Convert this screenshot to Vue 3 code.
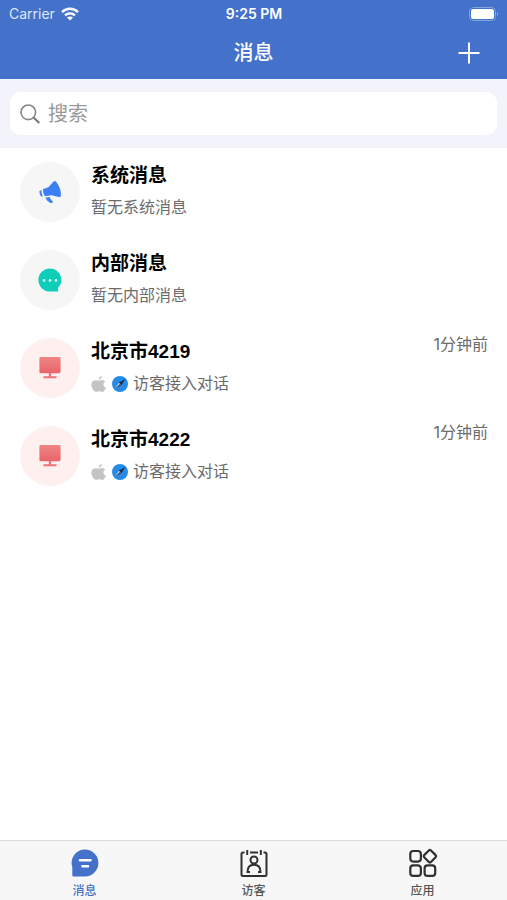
<script setup>
import { ref } from 'vue'

const keyword = ref('')
const activeTab = ref('message')

const conversations = [
  { id: 1, type: 'system', title: '系统消息', summary: '暂无系统消息' },
  { id: 2, type: 'internal', title: '内部消息', summary: '暂无内部消息' },
  { id: 3, type: 'visitor', title: '北京市4219', summary: '访客接入对话', time: '1分钟前' },
  { id: 4, type: 'visitor', title: '北京市4222', summary: '访客接入对话', time: '1分钟前' }
]

const tabs = [
  { key: 'message', label: '消息' },
  { key: 'visitor', label: '访客' },
  { key: 'app', label: '应用' }
]
</script>

<template>
  <div class="page">
    <header class="header">
      <div class="status">
        <div class="status__side">
          <span class="status__carrier">Carrier</span>
          <svg class="status__wifi" viewBox="0 0 18 14" aria-hidden="true">
            <g fill="none" stroke="#fff" stroke-width="2.5">
              <path d="M1 5.2C5.6 .7 12.4 .7 17 5.2" />
              <path d="M4 8.4c2.9-2.7 7.1-2.7 10 0" />
            </g>
            <path d="M9 13.6 6 10.6c1.7-1.5 4.3-1.5 6 0Z" fill="#fff" />
          </svg>
        </div>
        <strong class="status__time">9:25 PM</strong>
        <div class="status__side status__side--right">
          <svg class="status__battery" viewBox="0 0 30 14" aria-hidden="true">
            <rect x=".5" y=".5" width="26" height="13" rx="4" fill="none" stroke="#86a4df" />
            <rect x="2" y="2" width="23" height="10" rx="2.5" fill="#fff" />
            <path d="M28 5v4c1.6-.6 1.6-3.4 0-4Z" fill="#86a4df" />
          </svg>
        </div>
      </div>
      <div class="nav">
        <h1 class="nav__title">消息</h1>
        <button type="button" class="nav__add" aria-label="添加">
          <svg viewBox="0 0 22 22" aria-hidden="true">
            <path d="M11 .5v21M.5 11h21" fill="none" stroke="#fff" stroke-width="2" />
          </svg>
        </button>
      </div>
    </header>

    <div class="search">
      <label class="search__box">
        <svg class="search__icon" viewBox="0 0 20 20" aria-hidden="true">
          <circle cx="8.3" cy="8.3" r="7.3" fill="none" stroke="#858585" stroke-width="1.6" />
          <path d="m13.5 13.5 5.8 5.5" fill="none" stroke="#777" stroke-width="2" />
        </svg>
        <input v-model="keyword" type="text" placeholder="搜索" aria-label="搜索">
      </label>
    </div>

    <main class="list">
      <article v-for="item in conversations" :key="item.id" class="item">
        <div class="avatar" :class="`avatar--${item.type}`">
          <svg v-if="item.type === 'system'" viewBox="0 0 24 24" aria-hidden="true">
            <g fill="#3d7ff5">
              <path d="M4.8 9.2 10.4 7.2 15.6 1.6Q17.2 .3 18.4 2Q23.4 8.800 22.900 15.800Q22.700 17.500 20.900 17L13.400 15.200 6.800 16.200Q4.800 13.200 4.800 9.200Z" />
              <path d="M3.300 10Q3.200 13.700 4.900 16.500L3.200 16.600Q1.100 14 1.400 11Z" />
              <path d="M7.300 17.700 11.600 16.900Q12.200 19.400 14.900 21.700Q15.400 23.200 12.600 23.100Q9 21.400 7.300 17.700Z" />
            </g>
          </svg>
          <svg v-else-if="item.type === 'internal'" viewBox="0 0 24 24" aria-hidden="true">
            <path d="M12 .4A11.6 11.6 0 1 0 12 23.6h7.800q.8 0 .6-.8l-.6-2.5A11.6 11.6 0 0 0 12 .4Z" fill="#0dceb9" />
            <g fill="#d9fff9">
              <circle cx="6" cy="12.400" r="1.400" />
              <circle cx="12" cy="12.400" r="1.400" />
              <circle cx="18" cy="12.400" r="1.400" />
            </g>
          </svg>
          <svg v-else viewBox="0 0 24 24" aria-hidden="true">
            <defs>
              <linearGradient :id="`screen-${item.id}`" x1="0" y1="0" x2="0" y2="1">
                <stop offset="0" stop-color="#ee8585" />
                <stop offset="1" stop-color="#e96369" />
              </linearGradient>
            </defs>
            <rect x="1.400" y="1" width="21.200" height="16.200" rx="1.400" :fill="`url(#screen-${item.id})`" />
            <path d="M10.800 17h2.400v3.200h4.600q1 0 1 1t-1 1H6.200q-1 0-1-1t1-1h4.600Z" fill="#ea7278" />
          </svg>
        </div>

        <div class="item__body">
          <h2 class="item__title">{{ item.title }}</h2>
          <p class="item__summary">
            <template v-if="item.type === 'visitor'">
              <svg class="item__badge" viewBox="0 0 16 16" aria-label="Apple">
                <g fill="#c4c4c4">
                  <path d="M10.700 0q.3 2.800-2.900 3.800Q7.600 1 10.700 0Z" />
                  <path d="M7.800 4.700Q11.500 3.100 14.200 5.500Q12.300 6.800 12.400 8.800Q12.600 11 14.900 11.700Q13.200 15.700 11.100 16Q10 15.300 8.100 15.200Q6.600 15.400 5.100 16Q2.400 15.400 .8 11.500Q-.6 6.700 2.300 4.900Q4.200 3.700 7.800 4.700Z" />
                </g>
              </svg>
              <svg class="item__badge" viewBox="0 0 16 16" aria-label="Safari">
                <circle cx="8" cy="8" r="8" fill="#258be6" />
                <path d="M13.200 3 9.500 9.300 6.700 6.700Z" fill="#17304f" />
                <path d="M2.800 13 6.700 6.700 9.500 9.300Z" fill="#b4cde3" />
                <path d="M2.800 13 9.500 9.300 8 8Z" fill="#1d3d62" />
              </svg>
            </template>
            <span>{{ item.summary }}</span>
          </p>
        </div>
        <time v-if="item.time" class="item__time">{{ item.time }}</time>
      </article>
    </main>

    <nav class="tabbar">
      <button
        v-for="tab in tabs"
        :key="tab.key"
        type="button"
        class="tabbar__item"
        :class="{ 'tabbar__item--active': activeTab === tab.key }"
        @click="activeTab = tab.key"
      >
        <svg v-if="tab.key === 'message'" viewBox="0 0 28 28" aria-hidden="true">
          <path d="M14 .6A13.400 13.400 0 0 1 14 27.400H2.800Q1.300 27.400 1.300 25.900V18.500A13.400 13.400 0 0 1 14 .6Z" fill="currentColor" />
          <path d="M9 11.200h10.500M11.500 17.200h5.500" stroke="#fff" stroke-width="2.600" stroke-linecap="round" />
        </svg>
        <svg v-else-if="tab.key === 'visitor'" viewBox="0 0 28 28" aria-hidden="true">
          <g fill="none" stroke="currentColor" stroke-width="2">
            <path d="M4.500 3.500H3Q1.500 3.500 1.500 5v20.500Q1.500 27 3 27h22q1.500 0 1.500-1.500V5q0-1.500-1.500-1.500h-1.500M10 3.500h8M7.200 1v5M20.800 1v5" />
            <circle cx="14" cy="11" r="3.500" />
            <path d="M10 23H7.500Q7.500 15.800 14 15.800T20.500 23H18" />
          </g>
        </svg>
        <svg v-else viewBox="0 0 28 28" aria-hidden="true">
          <g fill="none" stroke="currentColor" stroke-width="2.200">
            <rect x="1.300" y="2" width="10.600" height="10.600" rx="3" />
            <rect x="1.300" y="16.300" width="10.600" height="10.600" rx="3" />
            <rect x="15.600" y="16.300" width="10.600" height="10.600" rx="3" />
            <rect x="16.100" y="2.400" width="9.600" height="9.600" rx="1.500" transform="rotate(45 20.900 7.200)" />
          </g>
        </svg>
        <span class="tabbar__label">{{ tab.label }}</span>
      </button>
    </nav>
  </div>
</template>

<style>
body {
  margin: 0;
  background: #fff;
}
</style>

<style scoped>
.page {
  display: flex;
  flex-direction: column;
  min-height: 100vh;
  background: #fff;
  color: #000;
  font-family: "Liberation Sans", "Noto Sans CJK SC", sans-serif;
}

.page svg {
  display: block;
  flex-shrink: 0;
  overflow: visible;
}

.header {
  background: #4471c9;
  color: #fff;
}

.status {
  display: flex;
  align-items: center;
  height: 27px;
  padding: 0 8px 0 9px;
  font-family: Inter, sans-serif;
  font-size: 14px;
}

.status__side {
  display: flex;
  flex: 1;
  align-items: center;
  gap: 6px;
}

.status__side--right {
  justify-content: flex-end;
}

.status__carrier {
  color: #dfe8fa;
}

.status__time {
  font-weight: 600;
}

.status__wifi {
  width: 18px;
  height: 14px;
}

.status__battery {
  width: 30px;
  height: 14px;
}

.nav {
  display: grid;
  grid-template-columns: 1fr auto 1fr;
  align-items: center;
  height: 52px;
  padding: 0 27px;
}

.nav__title {
  grid-column: 2;
  margin: 0;
  font-size: 20px;
  font-weight: 500;
  line-height: 28px;
}

.nav__add {
  justify-self: end;
  padding: 0;
  border: 0;
  background: none;
}

.nav__add svg {
  width: 22px;
  height: 22px;
}

.search {
  padding: 13px 10px;
  background: #f3f4fb;
}

.search__box {
  display: flex;
  align-items: center;
  gap: 8px;
  height: 43px;
  padding: 0 10px;
  border-radius: 11px;
  background: #fff;
}

.search__icon {
  width: 20px;
  height: 20px;
}

.search__box input {
  flex: 1;
  min-width: 0;
  padding: 0;
  border: 0;
  outline: 0;
  background: none;
  font-family: inherit;
  font-size: 20px;
  line-height: 28px;
}

.search__box input::placeholder {
  color: #999;
  opacity: 1;
}

.list {
  flex: 1;
}

.item {
  display: flex;
  align-items: flex-start;
  gap: 11px;
  height: 60px;
  padding: 14px 19px 14px 20px;
}

.avatar {
  display: flex;
  flex-shrink: 0;
  align-items: center;
  justify-content: center;
  width: 60px;
  height: 60px;
  border-radius: 50%;
  background: #f6f6f6;
}

.avatar--visitor {
  background: #fff0f0;
}

.avatar svg {
  width: 24px;
  height: 24px;
}

.item__body {
  flex: 1;
  min-width: 0;
}

.item__title {
  margin: 0;
  font-size: 19px;
  font-weight: 700;
  line-height: 28px;
}

.item__summary {
  display: flex;
  align-items: center;
  gap: 5px;
  margin: 6px 0 0;
  color: #6b6b6b;
  font-size: 16px;
  line-height: 24px;
}

.item__badge {
  width: 16px;
  height: 16px;
}

.item__time {
  color: #6b6b6b;
  font-family: Inter, "Noto Sans CJK SC", sans-serif;
  font-size: 16px;
  line-height: 12px;
}

.tabbar {
  display: flex;
  box-sizing: border-box;
  height: 60px;
  border-top: 1px solid #dcdcdc;
  background: #f7f7f7;
}

.tabbar__item {
  display: flex;
  flex: 1;
  flex-direction: column;
  align-items: center;
  gap: 6px;
  padding: 8px 0 0;
  border: 0;
  background: none;
  color: #303030;
  font-family: inherit;
  font-size: 12px;
  font-weight: 500;
  line-height: 16px;
}

.tabbar__label {
  color: #555;
}

.tabbar__item--active,
.tabbar__item--active .tabbar__label {
  color: #4471c9;
}

.tabbar__item svg {
  width: 28px;
  height: 28px;
}
</style>
